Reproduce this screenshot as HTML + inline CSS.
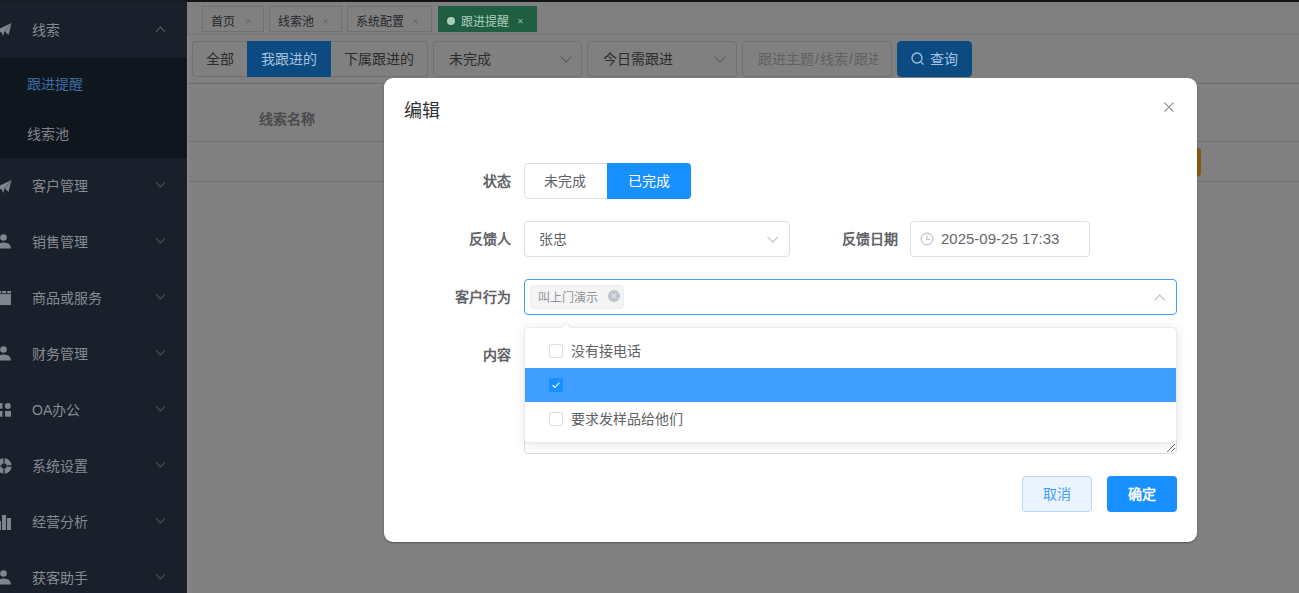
<!DOCTYPE html>
<html lang="zh-CN">
<head>
<meta charset="utf-8">
<style>
*{box-sizing:border-box;margin:0;padding:0}
html,body{width:1299px;height:593px;overflow:hidden;background:#808080;font-family:"Liberation Sans",sans-serif;font-size:14px}
.abs{position:absolute}
.t{position:absolute;white-space:nowrap;line-height:20px}
/* sidebar */
#side{position:absolute;left:0;top:0;width:187px;height:593px;background:#1a202b}
#topstrip{position:absolute;left:187px;top:0;width:1112px;height:2px;background:#131313;z-index:5}
#topstrip2{position:absolute;left:0;top:0;width:187px;height:1px;background:#161b24;z-index:5}
.mi{position:absolute;left:0;width:187px;height:56px}
.mi .lbl{position:absolute;left:32px;top:18px;line-height:20px;color:#868b93;font-size:14px}
.mi .arr{position:absolute;left:157px;top:21px;width:7px;height:7px;border-right:1px solid #4d535c;border-bottom:1px solid #4d535c;transform:rotate(45deg)}
.mi .arr.up{transform:rotate(-135deg);top:26px;border-color:#5a6069}
#sub{position:absolute;left:0;top:58px;width:187px;height:100px;background:#10161e}
/* main */
.tag{position:absolute;top:6px;height:26px;border:1px solid #707174;background:#808080;color:#25272c;font-size:12px;line-height:24px}
.tag .x{position:absolute;font-size:8px;line-height:20px;color:#66686c}
.lab{font-weight:bold;color:#606266}
.btn{position:absolute;white-space:nowrap;top:41px;height:36px;border:1px solid #6f7072;color:#2b2c2e;font-size:14px;line-height:34px;text-align:center}
</style>
</head>
<body>
<div id="topstrip"></div><div id="topstrip2"></div>
<div id="side">
  <div class="mi" style="top:2px">
    <svg class="abs" style="left:0;top:19px" width="14" height="16" viewBox="0 0 14 16"><path d="M-3 9 L11.5 2 L3 12.5 Z" fill="#7f848d"/><path d="M11.5 2 L8.5 14 L5 10.5 Z" fill="#7f848d"/><path d="M2 12 L3 15 L4.5 11.5Z" fill="#7f848d"/></svg>
    <span class="lbl">线索</span><span class="arr up"></span>
  </div>
  <div id="sub">
    <span class="t" style="left:27px;top:16px;color:#3a6ba3">跟进提醒</span>
    <span class="t" style="left:27px;top:66px;color:#81868d">线索池</span>
  </div>
  <div class="mi" style="top:158px"><svg class="abs" style="left:0;top:20px" width="14" height="16" viewBox="0 0 14 16"><path d="M-3 9 L11.5 2 L3 12.5 Z" fill="#7f848d"/><path d="M11.5 2 L8.5 14 L5 10.5 Z" fill="#7f848d"/><path d="M2 12 L3 15 L4.5 11.5Z" fill="#7f848d"/></svg><span class="lbl">客户管理</span><span class="arr"></span></div>
  <div class="mi" style="top:214px"><svg class="abs" style="left:0;top:19px" width="14" height="18" viewBox="0 0 14 18"><circle cx="3.5" cy="4.5" r="3.3" fill="#7f848d"/><path d="M-4 15.5 Q-4 9.5 3.5 9.5 Q11 9.5 11 15.5 Z" fill="#7f848d"/></svg><span class="lbl">销售管理</span><span class="arr"></span></div>
  <div class="mi" style="top:270px"><svg class="abs" style="left:0;top:20px" width="14" height="16" viewBox="0 0 14 16"><rect x="-3" y="1" width="14" height="14" fill="#7f848d"/><rect x="-3" y="3.3" width="14" height="0.8" fill="#1a202b"/><rect x="1.2" y="1" width="0.9" height="2.3" fill="#1a202b"/><rect x="6.2" y="1" width="1.1" height="2.3" fill="#1a202b"/></svg><span class="lbl">商品或服务</span><span class="arr"></span></div>
  <div class="mi" style="top:326px"><svg class="abs" style="left:0;top:19px" width="14" height="18" viewBox="0 0 14 18"><circle cx="3.5" cy="4.5" r="3.3" fill="#7f848d"/><path d="M-4 15.5 Q-4 9.5 3.5 9.5 Q11 9.5 11 15.5 Z" fill="#7f848d"/></svg><span class="lbl">财务管理</span><span class="arr"></span></div>
  <div class="mi" style="top:382px"><svg class="abs" style="left:0;top:20px" width="14" height="16" viewBox="0 0 14 16"><rect x="-3" y="1" width="5.5" height="5.7" fill="#7f848d"/><circle cx="7.8" cy="3.9" r="3" fill="#7f848d"/><rect x="-3" y="9" width="5.5" height="5.7" fill="#7f848d"/><rect x="5" y="9" width="6" height="5.7" fill="#7f848d"/></svg><span class="lbl">OA办公</span><span class="arr"></span></div>
  <div class="mi" style="top:438px"><svg class="abs" style="left:0;top:19px" width="14" height="18" viewBox="0 0 14 18"><circle cx="4" cy="9" r="5.2" fill="none" stroke="#7f848d" stroke-width="5"/><path d="M4 0V5.8M4 12.2V18M7.2 9H13M0.8 9H-5" stroke="#1a202b" stroke-width="1.3"/></svg><span class="lbl">系统设置</span><span class="arr"></span></div>
  <div class="mi" style="top:494px"><svg class="abs" style="left:0;top:20px" width="14" height="16" viewBox="0 0 14 16"><rect x="-3" y="7" width="4" height="9" fill="#7f848d"/><rect x="2" y="1" width="4" height="15" fill="#7f848d"/><rect x="7" y="4" width="4" height="12" fill="#7f848d"/></svg><span class="lbl">经营分析</span><span class="arr"></span></div>
  <div class="mi" style="top:550px"><svg class="abs" style="left:0;top:19px" width="14" height="18" viewBox="0 0 14 18"><circle cx="3.5" cy="4.5" r="3.3" fill="#7f848d"/><path d="M-4 15.5 Q-4 9.5 3.5 9.5 Q11 9.5 11 15.5 Z" fill="#7f848d"/></svg><span class="lbl">获客助手</span><span class="arr"></span></div>
</div>

<!-- tags bar -->
<div class="abs" style="left:187px;top:34px;width:1112px;height:1px;background:#767676"></div>
<div class="tag" style="left:202px;width:62px"><span class="t" style="left:8px;top:4.5px">首页</span><span class="x" style="left:41.5px;top:5px">✕</span></div>
<div class="tag" style="left:269px;width:73px"><span class="t" style="left:8px;top:4.5px">线索池</span><span class="x" style="left:52px;top:5px">✕</span></div>
<div class="tag" style="left:347px;width:85px"><span class="t" style="left:8px;top:4.5px">系统配置</span><span class="x" style="left:64px;top:5px">✕</span></div>
<div class="tag" style="left:438px;width:99px;background:#205e43;border-color:#205e43;color:#a9cdb9">
  <span class="abs" style="left:8px;top:10px;width:8px;height:8px;border-radius:50%;background:#a9cdb9"></span>
  <span class="t" style="left:22px;top:4.5px">跟进提醒</span><span class="x" style="left:78px;top:5px;color:#8fbba3">✕</span></div>

<!-- toolbar -->
<div class="btn" style="left:192px;width:56px;border-radius:4px 0 0 4px">全部</div>
<div class="btn" style="left:247px;width:84px;background:#0c4a82;border-color:#0c4a82;color:#a6c2de">我跟进的</div>
<div class="btn" style="left:331px;width:97px;border-radius:0 4px 4px 0;border-left:none">下属跟进的</div>
<div class="btn" style="left:433px;width:149px;border-radius:4px;text-align:left;padding-left:15px">未完成<span class="abs" style="left:127.5px;top:10.5px;width:8px;height:8px;border-right:1px solid #5a5b5d;border-bottom:1px solid #5a5b5d;transform:rotate(45deg)"></span></div>
<div class="btn" style="left:587px;width:150px;border-radius:4px;text-align:left;padding-left:15px">今日需跟进<span class="abs" style="left:127.5px;top:10.5px;width:8px;height:8px;border-right:1px solid #5a5b5d;border-bottom:1px solid #5a5b5d;transform:rotate(45deg)"></span></div>
<div class="btn" style="left:742px;width:150px;border-radius:4px;text-align:left;padding-left:15px;color:#5f6062;overflow:hidden"><span class="abs" style="left:15px;top:0;width:120px;overflow:hidden;white-space:nowrap">跟进主题<span style="padding:0 1px">/</span>线索<span style="padding:0 1px">/</span>跟进</span></div>
<div class="btn" style="left:897px;width:75px;border-radius:4px;background:#0c4a82;border-color:#0c4a82;color:#a3c2e2;padding-left:18px">查询
  <svg class="abs" style="left:13px;top:10px" width="14" height="14" viewBox="0 0 14 14"><circle cx="6" cy="6" r="5" fill="none" stroke="#a3c2e2" stroke-width="1.3"/><path d="M9.6 9.6 L12.5 12.5" stroke="#a3c2e2" stroke-width="1.3"/></svg></div>

<!-- table -->
<div class="abs" style="left:187px;top:83px;width:1112px;height:1px;background:#6e6e6e"></div>
<div class="abs" style="left:187px;top:85px;width:1112px;height:1px;background:#868686"></div>
<div class="abs" style="left:187px;top:36px;width:2px;height:557px;background:#888"></div>
<div class="t" style="left:259px;top:109px;font-weight:bold;color:#4a4b4d">线索名称</div>
<div class="abs" style="left:189px;top:141px;width:1110px;height:1px;background:#707070"></div>
<div class="abs" style="left:189px;top:181px;width:1110px;height:1px;background:#707070"></div>
<div class="abs" style="left:1190px;top:148px;width:11px;height:28px;border-radius:3px;background:#7f5d12"></div>

<!-- modal -->
<div id="modal" class="abs" style="left:384px;top:78px;width:813px;height:464px;background:#fff;border-radius:9px;box-shadow:0 1px 2px rgba(0,0,0,.35)"></div>
<div class="t" style="left:404px;top:99px;font-size:18px;line-height:24px;color:#303133">编辑</div>
<svg class="abs" style="left:1162.5px;top:101px" width="12" height="12" viewBox="0 0 12 12"><path d="M1.4 1.6L10.4 10.6M10.4 1.6L1.4 10.6" stroke="#8e9096" stroke-width="1.2"/></svg>

<div class="t lab" style="left:440px;top:171px;width:71px;text-align:right">状态</div>
<div class="abs" style="left:524px;top:163px;width:84px;height:36px;border:1px solid #dcdfe6;border-radius:4px 0 0 4px"></div>
<div class="t" style="left:544px;top:171px;color:#606266">未完成</div>
<div class="abs" style="left:607px;top:163px;width:84px;height:36px;background:#1890ff;border-radius:0 4px 4px 0"></div>
<div class="t" style="left:628px;top:171px;color:#fff">已完成</div>

<div class="t lab" style="left:440px;top:229px;width:71px;text-align:right">反馈人</div>
<div class="abs" style="left:524px;top:221px;width:266px;height:36px;border:1px solid #dcdfe6;border-radius:4px"></div>
<div class="t" style="left:539px;top:229px;color:#606266">张忠</div>
<span class="abs" style="left:768.5px;top:232.5px;width:7.5px;height:7.5px;border-right:1px solid #b4b7bd;border-bottom:1px solid #b4b7bd;transform:rotate(45deg)"></span>

<div class="t lab" style="left:800px;top:229px;width:98px;text-align:right">反馈日期</div>
<div class="abs" style="left:910px;top:221px;width:180px;height:36px;border:1px solid #dcdfe6;border-radius:4px"></div>
<svg class="abs" style="left:920px;top:232px" width="14" height="14" viewBox="0 0 14 14"><circle cx="7" cy="7" r="5.8" fill="none" stroke="#c0c4cc" stroke-width="1.2"/><path d="M7 3.5V7.3H10" fill="none" stroke="#c0c4cc" stroke-width="1.2"/></svg>
<div class="t" style="left:941px;top:228.5px;font-size:15px;color:#65676b;letter-spacing:0px">2025-09-25 17:33</div>

<div class="t lab" style="left:440px;top:287px;width:71px;text-align:right">客户行为</div>
<div class="abs" style="left:524px;top:279px;width:653px;height:36px;border:1px solid #409eff;border-radius:4px"></div>
<div class="abs" style="left:530px;top:285px;width:94px;height:24px;background:#f4f4f5;border:1px solid #ededf0;border-radius:4px"></div>
<div class="t" style="left:538px;top:288px;font-size:12px;color:#909399">叫上门演示</div>
<svg class="abs" style="left:607px;top:289px" width="14" height="14" viewBox="0 0 14 14"><circle cx="7" cy="7" r="6" fill="#c0c4cc"/><path d="M4.6 4.6L9.4 9.4M9.4 4.6L4.6 9.4" stroke="#e8eaee" stroke-width="1"/></svg>
<span class="abs" style="left:1155.5px;top:295.5px;width:7.5px;height:7.5px;border-left:1px solid #b4b7bd;border-top:1px solid #b4b7bd;transform:rotate(45deg)"></span>

<div class="t lab" style="left:440px;top:345px;width:71px;text-align:right">内容</div>
<div class="abs" style="left:524px;top:337px;width:653px;height:117px;border:1px solid #dcdfe6;border-radius:4px"></div>
<svg class="abs" style="left:1166px;top:442px" width="10" height="10" viewBox="0 0 10 10"><path d="M9 2L1.2 9.8M9 6L5.2 9.8" stroke="#666" stroke-width="1"/></svg>

<!-- dropdown -->
<div class="abs" style="left:524px;top:327px;width:653px;height:116px;background:#fff;border:1px solid #e8eaef;border-radius:4px;box-shadow:0 2px 12px 0 rgba(0,0,0,.1)"></div>
<div class="abs" style="left:560px;top:322px;width:0;height:0;border-left:6px solid transparent;border-right:6px solid transparent;border-bottom:6px solid #e8eaef"></div>
<div class="abs" style="left:561px;top:323px;width:0;height:0;border-left:5px solid transparent;border-right:5px solid transparent;border-bottom:6px solid #fff"></div>
<div class="abs" style="left:549px;top:344px;width:14px;height:14px;border:1px solid #dcdfe6;border-radius:2px;background:#fff"></div>
<div class="t" style="left:571px;top:341px;color:#606266">没有接电话</div>
<div class="abs" style="left:525px;top:368px;width:651px;height:34px;background:#409eff"></div>
<div class="abs" style="left:549px;top:378px;width:14px;height:14px;border-radius:2px;background:#1890ff"></div>
<svg class="abs" style="left:549px;top:378px" width="14" height="14" viewBox="0 0 14 14"><path d="M3.5 7.2L6 9.5L10.5 4.5" fill="none" stroke="#fff" stroke-width="1.1"/></svg>
<div class="abs" style="left:549px;top:412px;width:14px;height:14px;border:1px solid #dcdfe6;border-radius:2px;background:#fff"></div>
<div class="t" style="left:571px;top:409px;color:#606266">要求发样品给他们</div>

<!-- footer -->
<div class="abs" style="left:1022px;top:476px;width:70px;height:36px;background:#ecf5ff;border:1px solid #b3d8ff;border-radius:4px;color:#409eff;text-align:center;line-height:34px">取消</div>
<div class="abs" style="left:1107px;top:476px;width:70px;height:36px;background:#1890ff;border-radius:4px;color:#fff;text-align:center;line-height:36px;font-weight:bold">确定</div>
</body>
</html>
